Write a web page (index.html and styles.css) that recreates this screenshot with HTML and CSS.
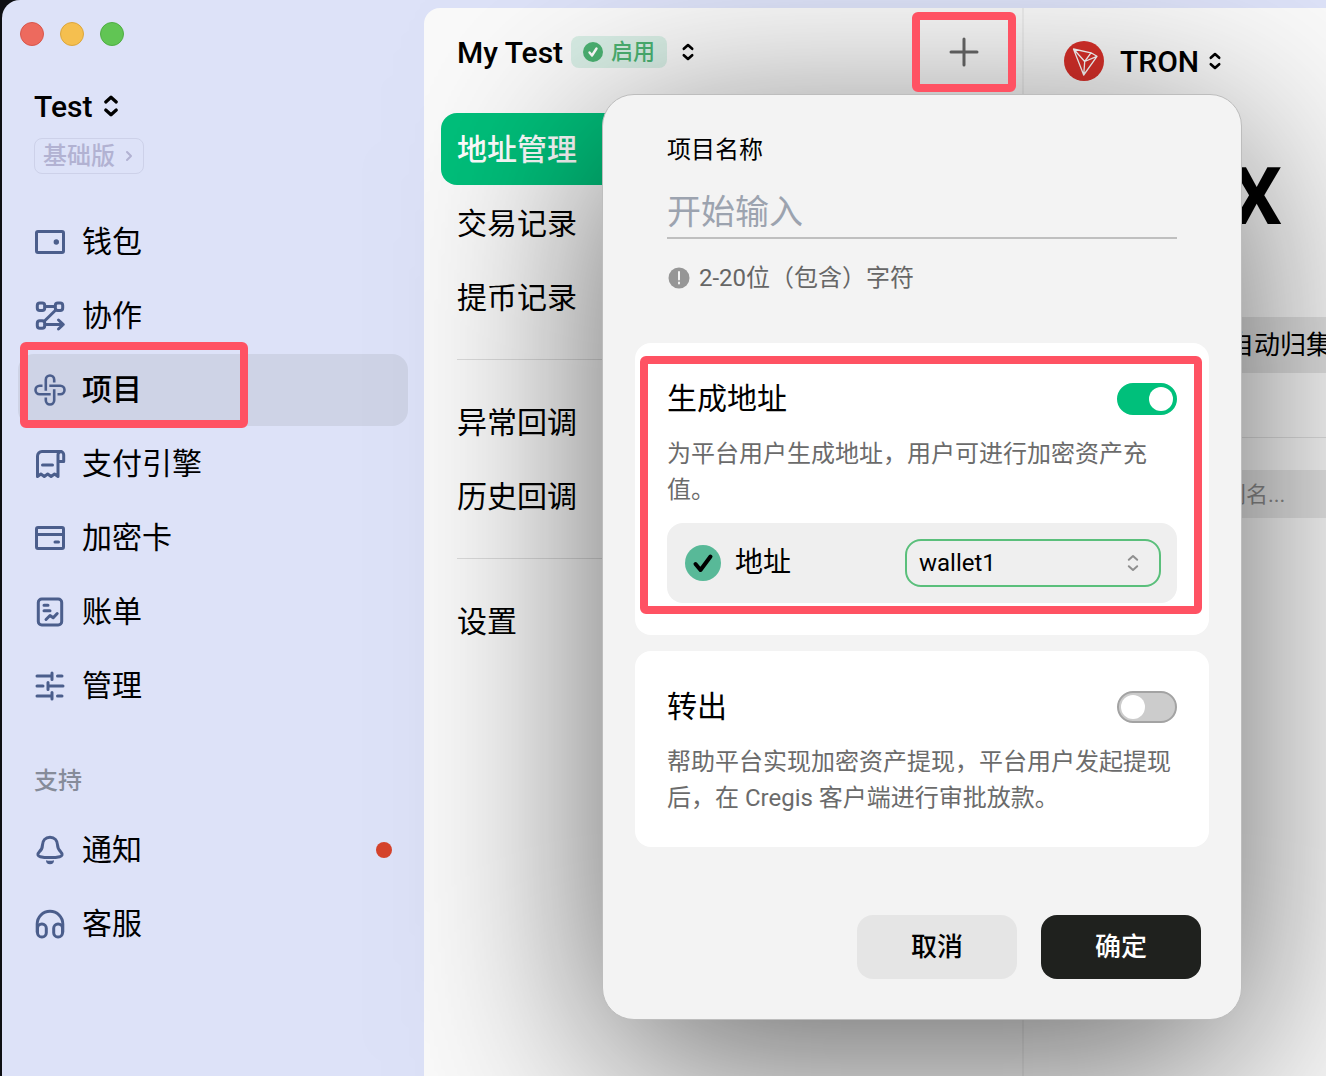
FILE: index.html
```html
<!DOCTYPE html>
<html lang="zh-CN">
<head>
<meta charset="utf-8">
<meta name="viewport" content="width=device-width, initial-scale=1">
<title>Cregis</title>
<link rel="stylesheet" href="styles.css">
</head>
<body>
<svg class="defs" aria-hidden="true">
  <symbol id="updown" viewBox="0 0 16 24"><path d="M3.800 8.800 8 5l4.200 3.800M3.800 15.200 8 19l4.200-3.800"/></symbol>
</svg>
<div class="window">
  <aside class="sidebar">
    <div class="lights"><span class="light red"></span><span class="light yellow"></span><span class="light green"></span></div>
    <button class="team" type="button">Test <svg class="updown big"><use href="#updown"/></svg></button>
    <a class="plan" href="#">基础版 <svg class="chev" viewBox="0 0 8 12"><path d="M2 2l4 4-4 4"/></svg></a>
    <nav class="menu">
      <a href="#"><svg class="icon" viewBox="0 0 32 32"><rect x="2.500" y="5.500" width="27" height="21" rx="1.500"/><circle class="dot" cx="22.300" cy="16" r="2.700"/></svg>钱包</a>
      <a href="#"><svg class="icon" viewBox="0 0 32 32"><rect x="3.300" y="3" width="7.400" height="7.400" rx="2.500"/><rect x="21.300" y="3" width="7.400" height="7.400" rx="2.500"/><rect x="3.300" y="20.800" width="7.400" height="7.400" rx="2.500"/><path d="M11 6.600h10M22 9.700 10 21.500M11 24.500h18M24.500 20l4.800 4.500-4.800 4.500"/></svg>协作</a>
      <a class="active" href="#"><svg class="icon" viewBox="0 0 32 32"><g class="thin"><path d="M11.800 16.700V5.700a4.200 4.200 0 0 1 8.400 0V8.500"/><path transform="rotate(90 16 16)" d="M11.800 16.700V5.700a4.200 4.200 0 0 1 8.400 0V8.500"/><path transform="rotate(180 16 16)" d="M11.800 16.700V5.700a4.200 4.200 0 0 1 8.400 0V8.500"/><path transform="rotate(270 16 16)" d="M11.800 16.700V5.700a4.200 4.200 0 0 1 8.400 0V8.500"/></g></svg>项目</a>
      <a href="#"><svg class="icon" viewBox="0 0 32 32"><path d="M24 28.500l-3.500-2.500-3.400 2.500-3.400-2.500-3.400 2.500-3.400-2.500-3.400 2.500V8a4.500 4.500 0 0 1 4.500-4.500H26.500a3.200 3.200 0 0 1 3.200 3.200V13.500H24M24 28.500V7a3.200 3.200 0 0 1 3.200-3.400M8.500 17h10"/></svg>支付引擎</a>
      <a href="#"><svg class="icon" viewBox="0 0 32 32"><rect x="2.500" y="5.500" width="27" height="21" rx="1.500"/><path d="M3 12.500h26M21 20h3.500"/></svg>加密卡</a>
      <a href="#"><svg class="icon" viewBox="0 0 32 32"><rect x="4.300" y="3" width="23.400" height="26" rx="3.500"/><path d="M10 9.200h4M10 14.700h6M12 23.500l4-4 3.200 2.300 4-4.300"/></svg>账单</a>
      <a href="#"><svg class="icon" viewBox="0 0 32 32"><path d="M3 6h15M18 3v6.500M23.500 6h4.500M3 16h6M14 12.500v7M14 16h15M3 26h15M18 22.500v6.500M23.500 26h4.500"/></svg>管理</a>
    </nav>
    <h2 class="group">支持</h2>
    <nav class="menu">
      <a href="#"><svg class="icon" viewBox="0 0 32 32"><path d="M16 3.300c-4.700 0-7.300 3.600-7.500 7.500-.2 4-1 5.300-3.200 7-2.600 2.400-1.500 4.300 1 4.900 4.500 1.200 14.900 1.200 19.400 0 2.500-.6 3.600-2.500 1-4.900-2.200-1.700-3-3-3.200-7-.2-3.900-2.800-7.500-7.500-7.500z"/><path class="dot" d="M12 26.200q4 1.300 8 0a4 4 0 0 1-8 0z"/></svg>通知<span class="unread"></span></a>
      <a href="#"><svg class="icon" viewBox="0 0 32 32"><rect x="3.500" y="16" width="8.800" height="13" rx="4.300"/><rect x="19.700" y="16" width="8.800" height="13" rx="4.300"/><path d="M3.200 24v-8a12.800 12.800 0 0 1 25.600 0v8"/></svg>客服</a>
    </nav>
  </aside>

  <main class="panel">
    <section class="project">
      <header class="project-head">
        <h1>My Test</h1>
        <span class="status"><svg viewBox="0 0 20 20"><circle cx="10" cy="10" r="10"/><path d="M6.500 10.500l2.500 3 4.500-7"/></svg>启用</span>
        <button class="switcher" type="button" aria-label="切换项目"><svg class="updown"><use href="#updown"/></svg></button>
        <button class="add" type="button" aria-label="新建项目"><svg viewBox="0 0 32 32"><path d="M16 3v26M3 16h26"/></svg></button>
      </header>
      <nav class="tabs">
        <a class="active" href="#">地址管理</a>
        <a href="#">交易记录</a>
        <a href="#">提币记录</a>
        <hr>
        <a href="#">异常回调</a>
        <a href="#">历史回调</a>
        <hr>
        <a href="#">设置</a>
      </nav>
    </section>
    <section class="detail">
      <button class="chain" type="button">
        <svg class="tron" viewBox="0 0 40 40"><circle cx="20" cy="20" r="20"/><path d="M9.500 8 27 11.800 33 15.300 19.700 34zM9.500 8 20.700 20.500 19.700 34M20.700 20.500 33 15.300M20.700 20.500 27 11.800"/></svg>
        TRON <svg class="updown"><use href="#updown"/></svg>
      </button>
      <p class="balance">X</p>
      <button class="collect" type="button">自动归集</button>
      <div class="search"><input type="text" placeholder="别名..." aria-label="别名"></div>
    </section>
  </main>

  <form class="dialog" role="dialog">
    <div class="field">
      <label for="name">项目名称</label>
      <input id="name" type="text" placeholder="开始输入">
      <p class="hint"><svg viewBox="0 0 22 22"><circle cx="11" cy="11" r="10.500"/><path d="M11 5v7.500M11 15.500v1"/></svg>2-20位（包含）字符</p>
    </div>
    <section class="card">
      <div class="card-head"><label for="gen">生成地址</label><input id="gen" class="toggle" type="checkbox" checked></div>
      <p>为平台用户生成地址，用户可进行加密资产充值。</p>
      <div class="wallet">
        <span class="tick"><input id="addr" type="checkbox" checked><svg viewBox="0 0 36 36"><path d="M10.500 19l5 6L25.500 11.500"/></svg></span>
        <label for="addr">地址</label>
        <span class="select"><select aria-label="钱包"><option>wallet1</option></select><svg class="updown"><use href="#updown"/></svg></span>
      </div>
    </section>
    <section class="card">
      <div class="card-head"><label for="out">转出</label><input id="out" class="toggle" type="checkbox"></div>
      <p>帮助平台实现加密资产提现，平台用户发起提现后，在 Cregis 客户端进行审批放款。</p>
    </section>
    <footer class="actions">
      <button type="button">取消</button>
      <button class="primary" type="submit">确定</button>
    </footer>
  </form>

  <div class="mark mark-menu"></div>
  <div class="mark mark-add"></div>
  <div class="mark mark-card"></div>
</div>
</body>
</html>
```
FILE: styles.css
```css
* { box-sizing: border-box; }
body {
  margin: 0;
  background: #0e0f13;
  padding-left: 2px;
  font-family: Roboto, "Noto Sans CJK SC", sans-serif;
  font-size: 30px;
  color: #000;
}
button, input, select { font: inherit; color: inherit; }
button { border: 0; background: none; padding: 0; }
a { color: inherit; text-decoration: none; }
h1, h2, p { margin: 0; font-weight: 400; }
svg { fill: none; stroke: currentColor; stroke-linecap: round; stroke-linejoin: round; flex: none; }
.defs { display: none; }
.updown { width: 16px; height: 24px; stroke-width: 2.600; }
.updown.big { width: 20px; height: 30px; }

.window {
  display: flex;
  min-height: 100vh;
  overflow: hidden;
  background: #dde2f8;
  border-top-left-radius: 18px;
}

.sidebar { width: 422px; flex: none; padding: 22px 16px; }
.lights { display: flex; gap: 16px; padding-left: 2px; }
.light { width: 24px; height: 24px; border-radius: 50%; border: 1px solid; }
.red { background: #ed6a5e; border-color: #d8564b; }
.yellow { background: #f5bf4f; border-color: #dca63c; }
.green { background: #61c554; border-color: #4fae43; }
.team {
  display: flex; align-items: center; gap: 9px;
  margin: 42px 0 0 16px; height: 36px;
  font-weight: 500;
}
.plan {
  display: inline-flex; align-items: center; gap: 10px;
  margin: 14px 0 32px 16px; padding: 0 10px 0 8px;
  height: 36px; width: 110px; line-height: 36px;
  border: 1px solid #cdd1e9; border-radius: 8px;
  font-size: 24px; font-weight: 500; color: #b2b2d2;
  vertical-align: top;
}
.chev { width: 8px; height: 12px; stroke-width: 2; }
.menu { display: flex; flex-direction: column; gap: 2px; }
.menu a {
  display: flex; align-items: center; gap: 16px;
  height: 72px; line-height: 74px; padding: 0 16px; border-radius: 16px;
}
.menu .active { background: #ced3e6; font-weight: 500; }
.icon { width: 32px; height: 32px; stroke: #4b5e8c; stroke-width: 3; }
.icon .thin { stroke-width: 2.600; stroke-linecap: butt; }
.icon .dot { fill: #4b5e8c; stroke: none; }
.group { margin: 41px 0 15px 16px; font-size: 24px; line-height: 36px; font-weight: 500; color: #868c9a; }
.unread { width: 16px; height: 16px; border-radius: 50%; background: #d5432c; margin-left: auto; }

.panel {
  flex: 1; min-width: 0;
  display: flex;
  margin-top: 8px;
  background: #fafafa;
  border-top-left-radius: 16px;
  overflow: hidden;
}
.project { width: 600px; flex: none; padding: 16px 16px 0 17px; border-right: 2px solid #eee; }
.project-head { display: flex; align-items: center; height: 56px; padding-left: 16px; margin-bottom: 33px; }
h1 { font-size: 30px; font-weight: 500; }
.status {
  display: flex; align-items: center; gap: 8px;
  margin-left: 8px; padding: 0 12px; height: 32px; line-height: 32px;
  border-radius: 8px; background: #d9efe6;
  font-size: 22px; font-weight: 500; color: #4bb272;
}
.status svg { width: 20px; height: 20px; stroke: #fff; stroke-width: 2.400; }
.status circle { fill: #4bb272; stroke: none; }
.switcher { display: flex; margin-left: 13px; }
.add { display: flex; margin: 0 26px 0 auto; color: #686868; }
.add svg { width: 32px; height: 32px; stroke-width: 3; }
.tabs { display: flex; flex-direction: column; gap: 2px; }
.tabs a { height: 72px; line-height: 74px; padding: 0 16px; border-radius: 16px; }
.tabs .active { background: #00c07b; color: #fff; font-weight: 500; }
.tabs hr { width: calc(100% - 32px); margin: 24px 16px; border: 0; border-top: 1px solid #dcdcdc; }

.detail { flex: 1; min-width: 0; padding: 28px 0 0 40px; }
.chain { display: flex; align-items: center; gap: 8px; height: 50px; font-weight: 500; }
.tron { width: 40px; height: 40px; margin-right: 8px; stroke: #fff; stroke-width: 1.300; }
.tron circle { fill: #d9302a; stroke: none; }
.balance { padding-right: 44px; margin-top: 61px; height: 100px; line-height: 100px; font-size: 80px; font-weight: 700; text-align: right; }
.collect {
  display: block; width: 100%; height: 56px; line-height: 56px; margin-top: 70px; padding-left: 164px;
  background: #e3e3e3; font-size: 26px; text-align: left; white-space: nowrap; overflow: hidden;
}
.search { margin-top: 64px; padding-top: 32px; border-top: 1px solid #e0e0e0; }
.search input {
  display: block; width: 100%; height: 48px; padding: 0 0 0 160px;
  border: 0; background: #e6e6e6; font-size: 22px;
}
.search input::placeholder { color: #8c8c8c; }

.dialog {
  position: absolute; left: 602px; top: 94px;
  width: 640px; padding: 36px 32px 40px;
  border: 1px solid #bdbdbd; border-radius: 32px;
  background: #f3f3f3;
  box-shadow: 0 44px 200px rgba(0, 0, 0, .6);
}
.field { display: flex; flex-direction: column; padding: 0 32px 46px; font-size: 24px; line-height: 38px; }
.field input {
  margin: 14px 0 20px; height: 56px; padding: 3px 0 0;
  border: 0; border-bottom: 2px solid #bfbfbf; border-radius: 0;
  background: none; font-size: 34px;
}
.field input::placeholder { color: #9ca3af; }
.hint { display: flex; align-items: center; gap: 9px; color: #666; }
.hint svg { width: 22px; height: 22px; margin-left: 1px; stroke: #f3f3f3; stroke-width: 2; }
.hint circle { fill: #969696; stroke: none; }

.card { padding: 32px; border-radius: 16px; background: #fff; }
.card + .card { margin-top: 16px; }
.card-head { display: flex; align-items: center; justify-content: space-between; height: 48px; line-height: 48px; }
.card p { margin: 13px 0 -1px; font-size: 24px; line-height: 36px; color: #6b6b6b; }
.toggle {
  appearance: none; display: flex; align-items: center;
  width: 60px; height: 32px; margin: 0; padding: 0 2px;
  border: 2px solid #a3a3a3; border-radius: 16px; background: #ccc;
}
.toggle::before { content: ""; width: 24px; height: 24px; border-radius: 50%; background: #fff; }
.toggle:checked { justify-content: flex-end; border-color: #00c07b; background: #00c07b; }

.wallet {
  display: flex; align-items: center;
  height: 80px; margin-top: 16px; padding: 0 16px 0 18px;
  border-radius: 16px; background: #efefef;
}
.wallet label { margin: 0 auto 0 14px; font-size: 28px; line-height: 80px; }
.tick { position: relative; display: flex; }
.tick input { appearance: none; width: 36px; height: 36px; margin: 0; border-radius: 50%; background: #58b998; }
.tick svg { position: absolute; inset: 0; stroke-width: 4; pointer-events: none; }
.select { position: relative; display: flex; width: 256px; }
.select select {
  appearance: none; width: 100%; height: 48px; padding: 0 48px 0 12px;
  border: 2px solid #5abf7b; border-radius: 16px; background: transparent; font-size: 24px;
}
.select svg { position: absolute; right: 20px; top: 12px; color: #8f8f8f; stroke-width: 2; pointer-events: none; }

.actions { display: flex; justify-content: flex-end; gap: 24px; margin-top: 68px; padding-right: 8px; }
.actions button { width: 160px; height: 64px; line-height: 64px; border-radius: 16px; background: #e5e5e5; font-size: 26px; font-weight: 500; }
.actions .primary { background: #1f211e; color: #fff; }

.mark { position: absolute; border: 8px solid #ff5263; border-radius: 6px; pointer-events: none; }
.mark-menu { left: 20px; top: 342px; width: 228px; height: 86px; }
.mark-add { left: 912px; top: 12px; width: 104px; height: 80px; }
.mark-card { left: 640px; top: 356px; width: 562px; height: 258px; }
```
